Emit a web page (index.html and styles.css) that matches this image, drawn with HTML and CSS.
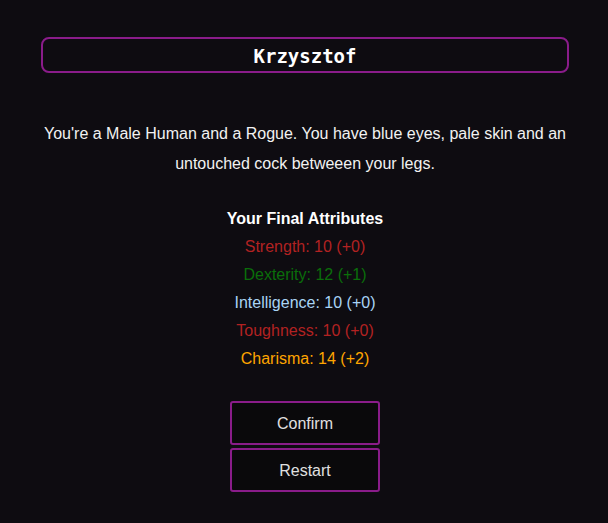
FILE: index.html
```html
<!DOCTYPE html>
<html>
<head>
    <title>Character Summary</title>
    <link rel="stylesheet" href="styles.css">
</head>
<body>
    <div class="page">
        <div class="name-box">Krzysztof</div>

        <p class="summary">You're a Male Human and a Rogue. You have blue eyes, pale skin and an untouched cock betweeen your legs.</p>

        <div class="attributes">
            <div class="attr-title">Your Final Attributes</div>
            <div class="attr str">Strength: 10 (+0)</div>
            <div class="attr dex">Dexterity: 12 (+1)</div>
            <div class="attr int">Intelligence: 10 (+0)</div>
            <div class="attr tou">Toughness: 10 (+0)</div>
            <div class="attr cha">Charisma: 14 (+2)</div>
        </div>

        <div class="actions">
            <button type="button" class="btn">Confirm</button>
            <button type="button" class="btn">Restart</button>
        </div>
    </div>
</body>
</html>
```

FILE: styles.css
```css
/* Page base */
body {
    font-family: "Liberation Sans", Arial, sans-serif;
    font-size: 16px;
    background-color: #0e0c11;
    color: #f2f2f2;
    margin: 0;
    padding: 0;
}

.page {
    padding: 37px 39px 0 41px;
}

/* Character name header */
.name-box {
    border: 2px solid #8a1c8a;
    border-radius: 8px;
    height: 32px;
    line-height: 35px;
    text-align: center;
    font-family: "Comic Sans MS", "DejaVu Sans Mono", monospace;
    font-weight: bold;
    font-size: 19px;
    color: #fff;
}

/* Description */
.summary {
    margin: 46px 0 0;
    text-align: center;
    line-height: 30px;
}

/* Attribute list */
.attributes {
    margin-top: 26px;
    text-align: center;
    line-height: 28px;
}

.attr-title {
    font-weight: bold;
    color: #fff;
}

.str { color: #b22222; }
.dex { color: #0a6e0a; }
.int { color: #a9d4f5; }
.tou { color: #b22222; }
.cha { color: #ffa500; }

/* Buttons */
.actions {
    margin-top: 28px;
    display: flex;
    flex-direction: column;
    align-items: center;
    gap: 3px;
}

.btn {
    width: 150px;
    height: 44px;
    padding-top: 2px;
    background-color: #0a090b;
    border: 2px solid #8a1c8a;
    border-radius: 3px;
    color: #e0e0e0;
    font-family: "Liberation Sans", Arial, sans-serif;
    font-size: 16px;
    cursor: pointer;
}
```
